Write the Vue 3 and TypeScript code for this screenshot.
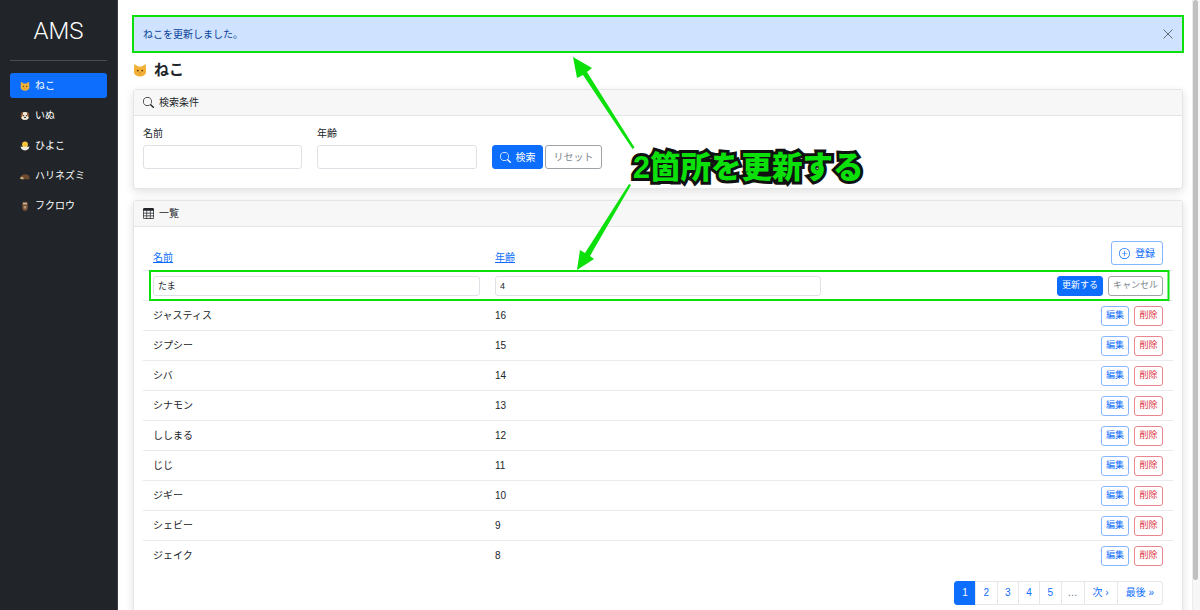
<script setup lang="ts">
interface Row { name: string; age: number }
const animals = [
  { key: 'cat', label: 'ねこ' },
  { key: 'dog', label: 'いぬ' },
  { key: 'chick', label: 'ひよこ' },
  { key: 'hedgehog', label: 'ハリネズミ' },
  { key: 'owl', label: 'フクロウ' },
]
const rows: Row[] = [
  { name: 'ジャスティス', age: 16 },
  { name: 'ジプシー', age: 15 },
  { name: 'シバ', age: 14 },
  { name: 'シナモン', age: 13 },
  { name: 'ししまる', age: 12 },
  { name: 'じじ', age: 11 },
  { name: 'ジギー', age: 10 },
  { name: 'シェビー', age: 9 },
  { name: 'ジェイク', age: 8 },
]
const pages = ['1', '2', '3', '4', '5', '…', '次 ›', '最後 »']
const searchPath = 'M11.742 10.344a6.5 6.5 0 1 0-1.397 1.398h-.001c.03.04.062.078.098.115l3.85 3.85a1 1 0 0 0 1.415-1.414l-3.85-3.85a1.007 1.007 0 0 0-.115-.1zM12 6.5a5.5 5.5 0 1 1-11 0 5.5 5.5 0 0 1 11 0z'
</script>

<template>
  <div class="app">
    <aside class="sidebar">
      <div class="brand">AMS</div>
      <hr class="rule" />
      <ul class="nav">
        <li v-for="(a, i) in animals" :key="a.key" class="nav-item" :class="{ active: i === 0 }">
          <svg class="emoji" viewBox="0 0 16 16">
            <template v-if="a.key === 'cat'">
              <path d="M1.500 1l4.500 3h4l4.500-3 .5 9c0 3.500-3.500 5.500-7 5.500s-7-2-7-5.500z" fill="#f2b136" />
              <circle cx="5.400" cy="8.600" r="1" fill="#5b3a10" /><circle cx="10.600" cy="8.600" r="1" fill="#5b3a10" />
              <path d="M7 11h2L8 12.200z" fill="#a8641c" />
            </template>
            <template v-else-if="a.key === 'dog'">
              <circle cx="8" cy="8" r="6.500" fill="#f4ead9" />
              <path d="M3 2.500C.8 4 .6 9 2.200 10.500 4 9 4.600 5 5 3zM13 2.500c2.200 1.500 2.400 6.500.8 8C12 9 11.400 5 11 3z" fill="#8a4e24" />
              <circle cx="5.800" cy="7.400" r="1" fill="#222" /><circle cx="10.200" cy="7.400" r="1" fill="#222" />
              <ellipse cx="8" cy="10.400" rx="1.500" ry="1.100" fill="#222" />
            </template>
            <template v-else-if="a.key === 'chick'">
              <circle cx="8" cy="5.500" r="4.700" fill="#f8c43c" />
              <path d="M7 6h2L8 7.500z" fill="#e8811e" />
              <path d="M1 8.500l2.300 1 2.200-1 2.500 1 2.500-1 2.200 1 2.300-1c0 4.500-2.800 6.500-7 6.500s-7-2-7-6.500z" fill="#f3ece0" />
            </template>
            <template v-else-if="a.key === 'hedgehog'">
              <path d="M0 11.500c1-4.500 4.500-6.500 8.500-6.500s7 2.500 7 6.500c0 1-.5 1.500-1.500 1.500H2.500C1.500 13 .5 12.500 0 11.500z" fill="#6b4a2e" />
              <path d="M0 11.500c.5-1.500 2-2.500 3.500-2.500S6 10.500 6 13H2.500C1.500 13 .5 12.500 0 11.500z" fill="#c9a77e" />
            </template>
            <template v-else>
              <path d="M4.500 1h7c1 2 1 3.500.8 5 .7 4-.3 8-1.800 9.500H5.500C4 14 3 10 3.700 6c-.2-1.500-.2-3 .8-5z" fill="#77523a" />
              <circle cx="6.400" cy="4" r="1.400" fill="#e9dcc6" /><circle cx="9.600" cy="4" r="1.400" fill="#e9dcc6" />
              <path d="M6 8h4v4H6z" fill="#b59472" />
            </template>
          </svg>
          <span>{{ a.label }}</span>
        </li>
      </ul>
    </aside>

    <main class="main">
      <div class="alert">
        <span>ねこを更新しました。</span>
        <svg class="close" viewBox="0 0 16 16"><path d="M2 2l12 12M14 2L2 14" stroke="#5f6670" stroke-width="1.300" fill="none" /></svg>
      </div>
      <h1 class="title">
        <svg class="title-emoji" viewBox="0 0 16 16">
          <path d="M1.500 1l4.500 3h4l4.500-3 .5 9c0 3.500-3.500 5.500-7 5.500s-7-2-7-5.500z" fill="#f2b136" />
          <circle cx="5.400" cy="8.600" r="1" fill="#5b3a10" /><circle cx="10.600" cy="8.600" r="1" fill="#5b3a10" />
          <path d="M7 11h2L8 12.200z" fill="#a8641c" />
        </svg>
        ねこ
      </h1>

      <section class="card">
        <header class="card-header">
          <svg class="icon" viewBox="0 0 16 16"><path :d="searchPath" fill="#212529" /></svg>
          検索条件
        </header>
        <div class="search-body">
          <label class="field"><span>名前</span><input class="input" /></label>
          <label class="field"><span>年齢</span><input class="input" /></label>
          <div class="search-actions">
            <button class="btn primary search-btn">
              <svg class="icon" viewBox="0 0 16 16"><path :d="searchPath" fill="#fff" /></svg>
              検索
            </button>
            <button class="btn secondary reset-btn">リセット</button>
          </div>
        </div>
      </section>

      <section class="card list-card">
        <header class="card-header">
          <svg class="icon" viewBox="0 0 16 16"><path d="M0 2a2 2 0 0 1 2-2h12a2 2 0 0 1 2 2v12a2 2 0 0 1-2 2H2a2 2 0 0 1-2-2V2zm15 2h-4v3h4V4zm0 4h-4v3h4V8zm0 4h-4v3h3a1 1 0 0 0 1-1v-2zm-5 3v-3H6v3h4zm-5 0v-3H1v2a1 1 0 0 0 1 1h3zm-4-4h4V8H1v3zm0-4h4V4H1v3zm5-3v3h4V4H6zm4 4H6v3h4V8z" fill="#212529" /></svg>
          一覧
        </header>
        <div class="list-body">
          <table class="table">
            <colgroup><col class="col-name" /><col class="col-age" /><col /></colgroup>
            <thead>
              <tr>
                <th><a class="sort">名前</a></th>
                <th><a class="sort">年齢</a></th>
                <th class="actions">
                  <button class="btn outline-primary add-btn">
                    <svg class="icon" viewBox="0 0 16 16"><path d="M8 15A7 7 0 1 1 8 1a7 7 0 0 1 0 14zm0 1A8 8 0 1 0 8 0a8 8 0 0 0 0 16z" fill="#0d6efd" /><path d="M8 4a.5.5 0 0 1 .5.5v3h3a.5.5 0 0 1 0 1h-3v3a.5.5 0 0 1-1 0v-3h-3a.5.5 0 0 1 0-1h3v-3A.5.5 0 0 1 8 4z" fill="#0d6efd" /></svg>
                    登録
                  </button>
                </th>
              </tr>
            </thead>
            <tbody>
              <tr class="edit-row">
                <td><input class="input small" value="たま" /></td>
                <td><input class="input small" value="4" /></td>
                <td class="actions">
                  <button class="btn primary sm update-btn">更新する</button>
                  <button class="btn secondary sm">キャンセル</button>
                </td>
              </tr>
              <tr v-for="r in rows" :key="r.name">
                <td class="name">{{ r.name }}</td>
                <td class="age">{{ r.age }}</td>
                <td class="actions">
                  <button class="btn outline-primary sm">編集</button>
                  <button class="btn outline-danger sm">削除</button>
                </td>
              </tr>
            </tbody>
          </table>
          <nav class="pager">
            <span v-for="(p, i) in pages" :key="p" class="page" :class="{ current: i === 0, muted: p === '…' }">{{ p }}</span>
          </nav>
        </div>
      </section>
    </main>

    <div class="scrollbar"><div class="thumb"></div></div>

    <svg class="annotation" viewBox="0 0 1200 610">
      <rect x="150" y="271" width="1018.500" height="29" fill="none" stroke="#0be00b" stroke-width="2" />
      <path d="M573 57L592 68 587 72 634.500 147.500 632.500 149 583 75 577 78z" fill="#0be00b" />
      <path d="M577 270L580 250 585 253 629 184 631 185 590 256 594 259z" fill="#0be00b" />
    </svg>
    <div class="callout">2箇所を更新する</div>
  </div>
</template>

<style>
html, body { margin: 0; background: #fff; }
</style>

<style scoped>
.app {
  position: relative;
  display: flex;
  width: 1200px;
  height: 610px;
  overflow: hidden;
  background: #fff;
  color: #212529;
  font-family: "Liberation Sans", "Noto Sans CJK JP", sans-serif;
  font-size: 10px;
  line-height: 15px;
}
.sidebar {
  flex: 0 0 118px;
  box-sizing: border-box;
  padding: 0 10px;
  background: #212529;
  border-right: 1px solid #3a3f44;
  color: #fff;
}
.brand {
  padding-top: 16px;
  text-align: center;
  font-family: Roboto, "Liberation Sans", sans-serif;
  font-size: 24px;
  line-height: 30px;
  font-weight: 300;
}
.rule { margin: 14px 0 12px; border: 0; border-top: 1px solid #494d52; }
.nav { list-style: none; margin: 0; padding: 0; }
.nav-item {
  display: flex;
  align-items: center;
  gap: 5px;
  height: 25px;
  margin-bottom: 5px;
  padding-left: 10px;
  border-radius: 3px;
}
.nav-item.active { background: #0d6efd; }
.emoji { width: 10px; height: 10px; flex: none; }
.main {
  flex: 1;
  min-width: 0;
  padding: 16px 9px 0 15px;
}
.alert {
  display: flex;
  align-items: center;
  justify-content: space-between;
  box-sizing: border-box;
  height: 36px;
  padding: 0 10px;
  background: #cfe2ff;
  color: #084298;
  outline: 2px solid #0be00b;
  outline-offset: -1px;
}
.close { width: 12px; height: 12px; margin-right: -1px; }
.title {
  display: flex;
  align-items: center;
  gap: 7px;
  margin: 8px 0 9px;
  font-size: 15px;
  line-height: 20px;
  font-weight: 700;
}
.title-emoji { width: 14px; height: 14px; }
.card {
  border: 1px solid #e4e5e6;
  border-radius: 3px;
  background: #fff;
  box-shadow: 0 3px 10px rgba(0, 0, 0, .12);
}
.card-header {
  display: flex;
  align-items: center;
  gap: 5px;
  box-sizing: border-box;
  height: 26px;
  padding: 0 9px;
  background: #f7f7f7;
  border-bottom: 1px solid #e4e5e6;
}
.icon { width: 11px; height: 11px; flex: none; }
.search-body {
  display: flex;
  align-items: flex-end;
  gap: 15px;
  height: 72px;
  box-sizing: border-box;
  padding: 10px 9px 19px;
}
.field { display: flex; flex-direction: column; gap: 4px; width: 160px; }
.field:first-child { width: 159px; }
.field span { line-height: 15px; }
.input {
  box-sizing: border-box;
  width: 100%;
  height: 24px;
  padding: 0 5px;
  border: 1px solid #dee2e6;
  border-radius: 3px;
  background: #fff;
  color: #212529;
  font: inherit;
}
.input.small { height: 20px; padding: 0 4px; font-size: 9px; }
.search-actions { display: flex; gap: 2px; }
.btn {
  box-sizing: border-box;
  display: inline-flex;
  align-items: center;
  justify-content: center;
  gap: 5px;
  height: 24px;
  padding: 0;
  border: 1px solid transparent;
  border-radius: 3px;
  background: #fff;
  font: inherit;
  white-space: nowrap;
}
.btn.sm { height: 20px; padding: 0 4px; font-size: 9px; }
.btn.sm.outline-danger { padding: 0 4.5px; }
.primary { background: #0d6efd; border-color: #0d6efd; color: #fff; }
.secondary { border-color: #9ea3a8; color: #7d858c; }
.outline-primary { border-color: #86b7fe; color: #0d6efd; }
.outline-danger { border-color: #ea868f; color: #dc3545; }
.search-btn { width: 51px; }
.reset-btn { width: 57px; }
.list-card { margin-top: 11px; }
.list-body { padding: 14px 9px 20px; }
.table { width: 100%; border-collapse: collapse; table-layout: fixed; }
.col-name { width: 342px; }
.col-age { width: 341px; }
th {
  box-sizing: border-box;
  height: 29px;
  padding: 0 0 0 10px;
  text-align: left;
  font-weight: 400;
  vertical-align: bottom;
}
th .sort { display: inline-block; padding-bottom: 5px; }
.sort { color: #0d6efd; text-decoration: underline; }
td {
  box-sizing: border-box;
  height: 30px;
  padding: 0 5px 0 10px;
  border-top: 1px solid #e9ebec;
}
th.actions { padding: 0 10px 5px 0; text-align: right; }
td.actions { padding: 0 10px 0 0; text-align: right; }
.actions .btn + .btn { margin-left: 5px; }
.add-btn { width: 52px; height: 24px; vertical-align: bottom; }
.pager { display: flex; justify-content: flex-end; padding: 10px 10px 0 0; }
.page {
  display: flex;
  align-items: center;
  justify-content: center;
  box-sizing: border-box;
  height: 24px;
  padding: 0 7.4px;
  margin-left: -1px;
  border: 1px solid #e4e6e8;
  color: #0d6efd;
  background: #fff;
}
.page:nth-last-child(-n+2) { padding: 0 8px; }
.page:first-child { border-radius: 3px 0 0 3px; }
.page:last-child { border-radius: 0 3px 3px 0; }
.page.current { background: #0d6efd; border-color: #0d6efd; color: #fff; }
.page.muted { color: #6c757d; padding: 0 6px; }
.scrollbar {
  flex: 0 0 8px;
  background: #f7f7f7;
  border-left: 1px solid #ececec;
  box-sizing: border-box;
}
.thumb { width: 5px; height: 580px; background: #c0c0c0; border-radius: 2.5px; }
.annotation { position: absolute; inset: 0; width: 1200px; height: 610px; pointer-events: none; }
.callout {
  position: absolute;
  left: 633px;
  top: 149px;
  font-size: 30.5px;
  line-height: 36px;
  font-weight: 900;
  color: #0be00b;
  white-space: nowrap;
  -webkit-text-stroke: 6px #111;
  paint-order: stroke fill;
}
</style>
